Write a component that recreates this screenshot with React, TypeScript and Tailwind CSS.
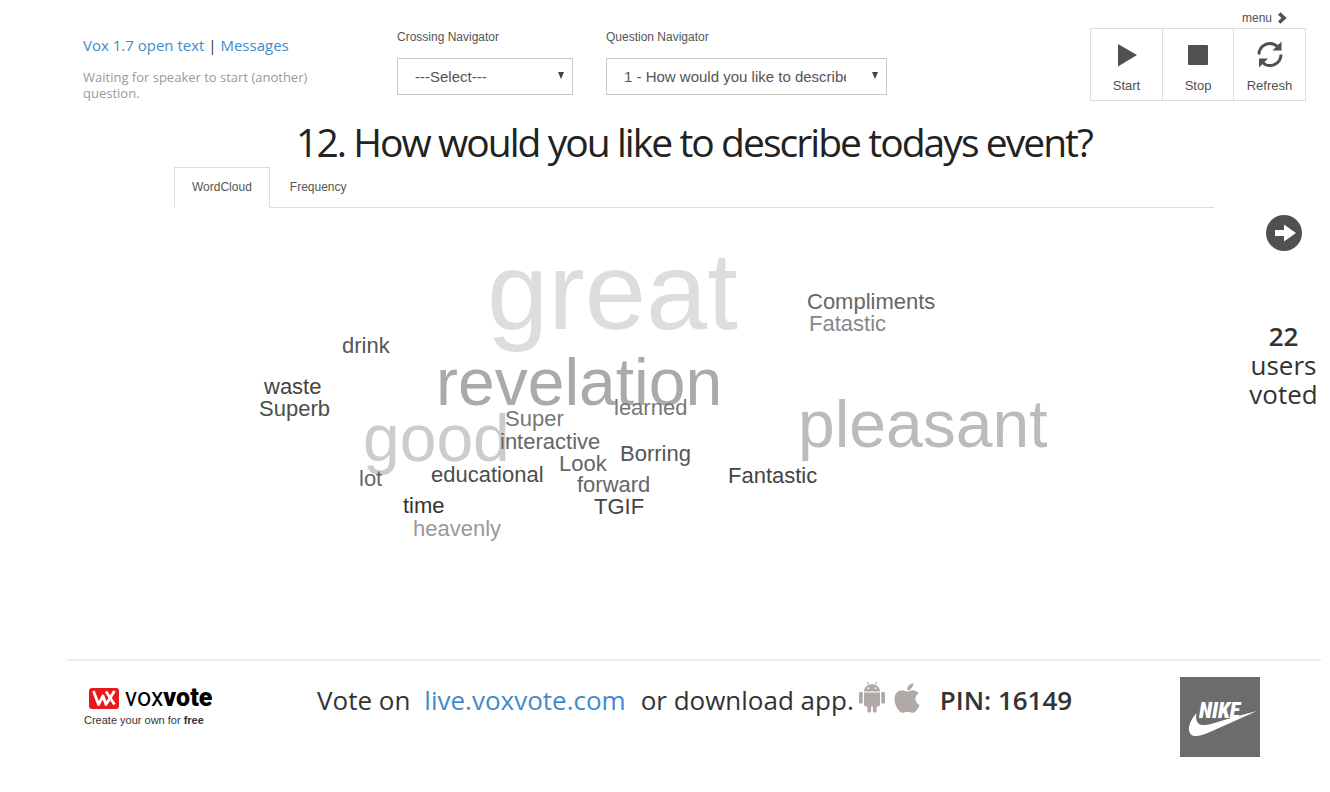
import { useState } from "react"
import { FaApple } from "react-icons/fa"

const words = [
    { text: "great", className: "left-[313px] top-[28px] text-[110px] text-[#dddddd]" },
    { text: "revelation", className: "left-[262px] top-[141px] text-[66px] text-[#aaaaaa]" },
    { text: "good", className: "left-[189px] top-[197px] text-[66px] text-[#cccccc]" },
    { text: "pleasant", className: "left-[624px] top-[183px] text-[66px] text-[#bbbbbb]" },
    { text: "Compliments", className: "left-[633px] top-[83px] text-[22px] text-[#666666]" },
    { text: "Fatastic", className: "left-[635px] top-[105px] text-[22px] text-[#888888]" },
    { text: "drink", className: "left-[168px] top-[127px] text-[22px] text-[#555555]" },
    { text: "waste", className: "left-[90px] top-[168px] text-[22px] text-[#444444]" },
    { text: "Superb", className: "left-[85px] top-[190px] text-[22px] text-[#4d4d4d]" },
    { text: "Super", className: "left-[331px] top-[200px] text-[22px] text-[#777777]" },
    { text: "learned", className: "left-[440px] top-[189px] text-[22px] text-[#777777]" },
    { text: "interactive", className: "left-[326px] top-[223px] text-[22px] text-[#666666]" },
    { text: "Borring", className: "left-[446px] top-[235px] text-[22px] text-[#555555]" },
    { text: "Look", className: "left-[385px] top-[245px] text-[22px] text-[#666666]" },
    { text: "lot", className: "left-[185px] top-[260px] text-[22px] text-[#666666]" },
    { text: "educational", className: "left-[257px] top-[256px] text-[22px] text-[#4d4d4d]" },
    { text: "forward", className: "left-[403px] top-[266px] text-[22px] text-[#666666]" },
    { text: "Fantastic", className: "left-[554px] top-[257px] text-[22px] text-[#444444]" },
    { text: "time", className: "left-[229px] top-[287px] text-[22px] text-[#333333]" },
    { text: "TGIF", className: "left-[420px] top-[288px] text-[22px] text-[#444444]" },
    { text: "heavenly", className: "left-[239px] top-[310px] text-[22px] text-[#999999]" },
]

const PlayIcon = () => (
    <svg width="28" height="28" viewBox="0 0 28 28" fill="currentColor">
        <path d="M5 3v22.500l19-11.500z" />
    </svg>
)

const StopIcon = () => (
    <svg width="28" height="28" viewBox="0 0 28 28" fill="currentColor">
        <rect x="4" y="4" width="20" height="20" rx="1" />
    </svg>
)

const RefreshIcon = () => (
    <svg width="28" height="28" viewBox="0 0 28 28" fill="none" stroke="currentColor" strokeWidth="3">
        <path d="M3 13.500A11 11 0 0 1 21.500 5.500" />
        <path d="M25 13.500A11 11 0 0 1 6.500 21.500" />
        <path d="M25.500 .5v9H16.500z" fill="currentColor" stroke="none" />
        <path d="M3 26.500V17.500H12z" fill="currentColor" stroke="none" />
    </svg>
)

const ChevronIcon = () => (
    <svg width="11" height="12" viewBox="0 0 11 12" fill="currentColor">
        <path d="M3.500 0.300 9.600 6 3.500 11.700 1 9.300 4.500 6 1 2.700z" />
    </svg>
)

const NextIcon = () => (
    <svg width="36" height="36" viewBox="0 0 36 36">
        <circle cx="18" cy="18" r="18" fill="#505050" />
        <path d="M9 15h9V9.500l12 8.500-12 8.500V21H9z" fill="#fff" />
    </svg>
)

const AndroidIcon = () => (
    <svg width="28" height="32" viewBox="0 0 28 32" fill="#b1a9a6">
        <path d="M6 10.500C6 7 8.700 4.800 10.700 4L8.900 1l.7-.4 1.900 3.100a9.500 9.500 0 0 1 5 0L18.400.6l.7.4-1.800 3C19.300 4.800 22 7 22 10.500zM10.500 6.300a.9.9 0 1 0 0 1.800.9.900 0 0 0 0-1.800zm7 0a.9.900 0 1 0 0 1.800.9.900 0 0 0 0-1.800z" fillRule="evenodd" />
        <path d="M6 11.500h16v12a2 2 0 0 1-2 2h-1.300v4.200a1.900 1.900 0 0 1-3.800 0v-4.200h-1.800v4.200a1.900 1.900 0 0 1-3.800 0v-4.200H8a2 2 0 0 1-2-2z" />
        <rect x="1" y="11" width="3.800" height="11.500" rx="1.200" />
        <rect x="23.200" y="11" width="3.800" height="11.500" rx="1.200" />
    </svg>
)

const VoxIcon = () => (
    <svg width="30" height="21" viewBox="0 0 30 21">
        <rect width="30" height="21" rx="3" fill="#e8191c" />
        <path d="M4.500 3l5 13.500L14 8l3 8.500L25.500 3M17 3.500l8.500 13" fill="none" stroke="#fff" strokeWidth="2.800" strokeLinejoin="round" />
    </svg>
)

const NikeLogo = () => (
    <svg width="80" height="80" viewBox="0 0 80 80">
        <rect width="80" height="80" fill="#6c6c6c" />
        <path d="M16.500 36C9.500 44 6.500 53 11 57.500c4 3.500 12 .5 19-2.500L77 34 56 39.500 31 47c-6 1.500-10 1.500-12.500-.5-2.500-2.500-3-6-2-10.500z" fill="#fff" />
        <text x="19" y="41" fill="#fff" fontSize="22" fontWeight="900" fontStyle="italic" fontFamily='"Liberation Sans Narrow", "Roboto Condensed", Roboto, sans-serif'>NIKE</text>
    </svg>
)

const actions = [
    { title: "Start", icon: PlayIcon, className: "w-[71px]" },
    { title: "Stop", icon: StopIcon, className: "w-[71px] border-l border-[#dddddd]" },
    { title: "Refresh", icon: RefreshIcon, className: "w-[72px] border-l border-[#dddddd]" },
]

const Navigator = ({ id, label, option, className }: { id: string, label: string, option: string, className: string }) => (
    <div className={className}>
        <label htmlFor={id} className="block text-[12px] leading-4 text-[#555555]">{label}</label>
        <div className="relative mt-[13px]">
            <select
                id={id}
                className="block h-[37px] w-full appearance-none border border-[#c8c8c8] bg-white pt-[2px] pr-10 pl-[17px] text-[15px] text-[#555555]"
            >
                <option>{option}</option>
            </select>
            <svg className="pointer-events-none absolute top-[14px] right-[9px]" width="6" height="7" viewBox="0 0 6 7" fill="#444">
                <path d="M0 0h6L3 7z" />
            </svg>
        </div>
    </div>
)

const Header = () => (
    <header className="flex items-start pr-[15px] pl-4">
        {/* session */}
        <div className="w-[314px] pt-[35px] font-['Open_Sans',sans-serif]">
            <p className="text-[15px] leading-5 text-[#333333]">
                <a href="#session" className="text-[#428bca]">Vox 1.7 open text</a>
                {" | "}
                <a href="#messages" className="text-[#428bca]">Messages</a>
            </p>
            <p className="mt-[14px] w-[250px] text-[13px] leading-4 text-[#999999]">
                Waiting for speaker to start (another) question.
            </p>
        </div>

        <Navigator id="crossing" label="Crossing Navigator" option="---Select---" className="w-[176px] pt-[29px]" />
        <Navigator id="question" label="Question Navigator" option="1 - How would you like to describe todays event?" className="ml-[33px] w-[281px] pt-[29px]" />

        {/* controls */}
        <div className="ml-auto pt-[10px] text-[#505050]">
            <a href="#menu" className="flex items-center justify-end gap-[5px] pr-[18px] text-[12px] leading-4">
                menu <ChevronIcon />
            </a>
            <div className="mt-[2px] flex border border-[#dddddd]">
                {actions.map((action) => (
                    <button
                        key={action.title}
                        className={`flex h-[71px] flex-col items-center pt-3 text-[13px] leading-4 ${action.className}`}
                    >
                        <action.icon />
                        <span className="mt-[9px]">{action.title}</span>
                    </button>
                ))}
            </div>
        </div>
    </header>
)

const Results = () => {
    const [tab, setTab] = useState("WordCloud")
    return (
        <section className="min-w-0 flex-1">
            <div role="tablist" className="flex gap-[2px] border-b border-[#dddddd] text-[12px] text-[#555555]">
                {["WordCloud", "Frequency"].map((name) => (
                    <button
                        key={name}
                        role="tab"
                        aria-selected={tab === name}
                        onClick={() => setTab(name)}
                        className={`-mb-px h-[41px] border px-[17px] pb-[2px] ${tab === name ? "border-[#dddddd] border-b-white bg-white" : "border-transparent"}`}
                    >
                        {name}
                    </button>
                ))}
            </div>
            <div className="relative min-h-[451px]">
                {words.map((word) => (
                    <span key={word.text} className={`absolute leading-none ${word.className}`}>{word.text}</span>
                ))}
            </div>
        </section>
    )
}

const Footer = () => (
    <footer className="flex items-start border-t-2 border-[#eeeeee] pt-4 pr-[61px] pl-[17px]">
        <a href="#voxvote" className="w-[233px] pt-[7px] text-[11px] leading-4 text-[#333333]">
            <span className="flex items-center pl-[5px] font-[Roboto,sans-serif] text-[25px] leading-7 text-black">
                <VoxIcon />
                <span className="ml-[6px]">vox</span>
                <span className="font-black">vote</span>
            </span>
            <span className="block">Create your own for <b>free</b></span>
        </a>
        <p className="flex items-start font-['Open_Sans',sans-serif] text-[26px] leading-[46px] text-[#333333]">
            <span>Vote on</span>
            <a href="#live" className="mr-[15px] ml-[14px] text-[#428bca]">live.voxvote.com</a>
            <span>or download app.</span>
            <span className="flex gap-1 pt-1 pl-1">
                <AndroidIcon />
                <FaApple size={34} color="#b1a9a6" />
            </span>
            <strong className="ml-4 font-semibold">PIN: 16149</strong>
        </p>
        <div className="ml-auto">
            <NikeLogo />
        </div>
    </footer>
)

const App = () => (
    <div className="mr-[9px] ml-[67px] bg-white font-['Liberation_Sans',Arial,sans-serif]">
        <Header />
        <h1 className="mt-[15px] mb-[-1px] text-center font-['Open_Sans',sans-serif] text-[39px] leading-[52px] tracking-tighter text-[#222222]">
            12. How would you like to describe todays event?
        </h1>
        <main className="flex pl-[107px]">
            <Results />
            <aside className="flex w-[107px] flex-col items-center pt-12 pl-8 text-center font-['Open_Sans',sans-serif] text-[26px] leading-[29px] text-[#333333]">
                <button aria-label="Next question">
                    <NextIcon />
                </button>
                <p className="mt-[71px]">
                    <strong className="block font-semibold">22</strong>
                    users voted
                </p>
            </aside>
        </main>
        <Footer />
    </div>
)
export default App
